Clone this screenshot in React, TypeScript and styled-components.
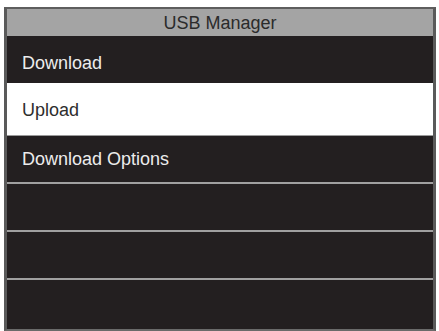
import styled, { createGlobalStyle } from 'styled-components';

const GlobalStyle = createGlobalStyle`
  html, body {
    margin: 0;
    padding: 0;
    background: #ffffff;
  }
  body {
    font-family: "Liberation Sans", Arial, sans-serif;
  }
`;

const Screen = styled.div`
  box-sizing: border-box;
  width: 432px;
  margin: 7px 0 0 4px;
  border-top: 2px solid #5e5e5e;
  border-left: 3px solid #5a5a5a;
  border-right: 3px solid #5a5a5a;
  border-bottom: 2px solid #6a6a6a;
  display: flex;
  flex-direction: column;
`;

const Header = styled.div`
  height: 27px;
  background: #a4a4a4;
  color: #2b2b2b;
  font-size: 18px;
  display: flex;
  align-items: center;
  justify-content: center;
  padding-top: 2px;
  box-sizing: border-box;
`;

const Row = styled.div<{ $height: number; $active?: boolean; $offset?: number; $line?: boolean }>`
  box-sizing: border-box;
  height: ${({ $height }) => $height}px;
  background: ${({ $active }) => ($active ? '#ffffff' : '#231f20')};
  color: ${({ $active }) => ($active ? '#2e2e2e' : '#ececec')};
  border-bottom: ${({ $line, $active }) =>
    $line ? ($active ? '1px solid #9a9a9a' : '2px solid #a0a0a0') : 'none'};
  font-size: 18px;
  display: flex;
  align-items: center;
  padding-left: 15px;
  padding-top: ${({ $offset = 0 }) => $offset}px;
`;

const rows = [
  { label: 'Download', height: 47, offset: 8, line: false },
  { label: 'Upload', height: 53, offset: 2, line: true, active: true },
  { label: 'Download Options', height: 48, offset: 0, line: true },
  { label: '', height: 48, line: true },
  { label: '', height: 48, line: true },
  { label: '', height: 49, line: false },
];

const App = () => {
  return (
    <>
      <GlobalStyle />
      <Screen>
        <Header>USB Manager</Header>
        {rows.map((r, i) => (
          <Row key={i} $height={r.height} $active={r.active} $offset={r.offset} $line={r.line}>
            {r.label}
          </Row>
        ))}
      </Screen>
    </>
  );
};

export default App;
